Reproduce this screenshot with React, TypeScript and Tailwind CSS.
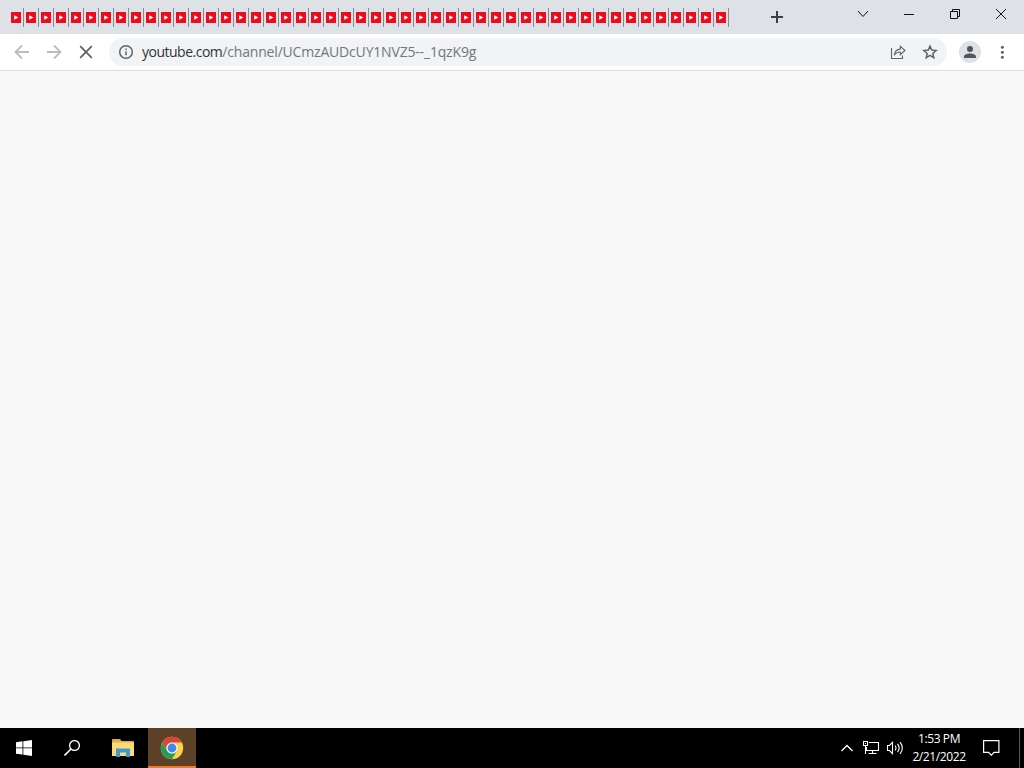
const TAB_COUNT = 48;

const YoutubeTab = () => (
  <div className="flex h-[19px] w-[15px] items-center justify-between pl-[2px]">
    <svg width="10" height="11" viewBox="0 0 10 11">
      <rect width="10" height="11" fill="#ee0b1c" />
      <path d="M3.2 3.2v4.6L7.4 5.5z" fill="#fff" />
    </svg>
    <div className="h-full w-px bg-[#858b91]" />
  </div>
);

const TabStrip = () => (
  <div className="flex h-[34px] bg-[#dee1e6]">
    <div className="flex pt-[8px] pl-[9px]">
      {Array.from({ length: TAB_COUNT }, (_, i) => (
        <YoutubeTab key={i} />
      ))}
    </div>

    <button className="ml-[34px] flex h-[33px] w-[28px] items-center justify-center">
      <svg width="12" height="12" viewBox="0 0 12 12" fill="#3c4043">
        <path d="M5 0h2v5h5v2H7v5H5V7H0V5h5z" />
      </svg>
    </button>

    <div className="ml-auto flex h-[28px] text-[#111]">
      <button className="flex w-[46px] items-center justify-center">
        <svg width="12" height="8" viewBox="0 0 12 8" fill="none" stroke="currentColor">
          <path d="M1 1l5 5.5L11 1" />
        </svg>
      </button>
      <button className="flex w-[46px] items-center justify-center">
        <svg width="10" height="2" viewBox="0 0 10 2">
          <path d="M0 1h10v1H0z" fill="currentColor" />
        </svg>
      </button>
      <button className="flex w-[46px] items-center justify-center">
        <svg width="10" height="10" viewBox="0 0 10 10" fill="none" stroke="currentColor">
          <path d="M.5 2.5h7v7h-7z" />
          <path d="M2.5 2.5v-2h7v7h-2" />
        </svg>
      </button>
      <button className="flex w-[46px] items-center justify-center">
        <svg width="10" height="10" viewBox="0 0 10 10" fill="none" stroke="currentColor">
          <path d="M0 0l10 10M10 0L0 10" />
        </svg>
      </button>
    </div>
  </div>
);

const Toolbar = () => (
  <div className="flex h-[37px] items-center border-b border-[#dadce0] bg-white pr-[14px] pl-[14px]">
    <div className="flex gap-[16px]">
      <svg width="16" height="16" viewBox="0 0 16 16" fill="none" stroke="#babcbe" strokeWidth="1.8">
        <path d="M15 8H2M8 1.5L1.5 8 8 14.5" />
      </svg>
      <svg width="16" height="16" viewBox="0 0 16 16" fill="none" stroke="#babcbe" strokeWidth="1.8">
        <path d="M1 8h13M8 1.5L14.5 8 8 14.5" />
      </svg>
      <svg width="16" height="16" viewBox="0 0 16 16" fill="none" stroke="#5f6368" strokeWidth="1.8">
        <path d="M2.2 2.2l11.6 11.6M13.8 2.2L2.2 13.8" />
      </svg>
    </div>

    <div className="ml-[15px] flex h-[28px] w-[838px] items-center rounded-full bg-[#f1f3f4] pr-[9px] pl-[9px]">
      <svg width="16" height="16" viewBox="0 0 16 16" fill="none" stroke="#5f6368" strokeWidth="1.5">
        <circle cx="8" cy="8" r="6.3" />
        <path d="M8 7.2v4M8 4.4v1.500" />
      </svg>
      <p className="ml-[8px] font-['Open_Sans','Noto_Sans',sans-serif] text-[14px] leading-[20px] tracking-[-0.18px] whitespace-nowrap text-[#73777b]">
        <span className="tracking-[-0.5px] text-[#303338]">youtube.com</span>/channel/UCmzAUDcUY1NVZ5--_1qzK9g
      </p>
      <div className="ml-auto flex gap-[16px]">
        <svg width="16" height="16" viewBox="0 0 16 16" fill="none" stroke="#5f6368" strokeWidth="1.1">
          <path d="M1.500 4v10.500h11v-3" />
          <path d="M4.200 11.300c.5-4 2.500-6 6.100-6.200V2.200l4.700 4.300-4.700 4.200V8c-2.800 0-4.600 1-6.100 3.300z" />
        </svg>
        <svg width="16" height="16" viewBox="0 0 16 16" fill="none" stroke="#5f6368" strokeWidth="1.5">
          <path d="M8 2.100l1.700 4 4.400.4-3.300 2.900 1 4.300L8 11.400l-3.800 2.300 1-4.300-3.300-2.900 4.400-.4z" />
        </svg>
      </div>
    </div>

    <div className="ml-[12px] flex h-[22px] w-[22px] items-center justify-center rounded-full bg-[#dee1e6]">
      <svg width="12" height="12" viewBox="0 0 12 12" fill="#4d5661">
        <circle cx="6" cy="3" r="3" />
        <path d="M0 12v-1.500C0 8.500 3.200 7.500 6 7.500s6 1 6 3V12z" />
      </svg>
    </div>
    <svg className="ml-auto" width="16" height="16" viewBox="0 0 16 16" fill="#5f6368">
      <circle cx="8.400" cy="3.300" r="1.500" />
      <circle cx="8.400" cy="8.300" r="1.500" />
      <circle cx="8.400" cy="13.300" r="1.500" />
    </svg>
  </div>
);

const ChromeLogo = () => (
  <svg width="24" height="24" viewBox="0 0 24 24">
    <circle cx="12" cy="12" r="11.2" fill="#fbd34c" />
    <path d="M2.300 6.400A11.200 11.200 0 0 1 21.700 6.400H12A5.600 5.600 0 0 0 7.150 14.800z" fill="#dc4437" />
    <path d="M2.300 6.400A11.200 11.200 0 0 0 12 23.200L16.850 14.800A5.600 5.600 0 0 1 7.150 14.800z" fill="#249b58" />
    <circle cx="12" cy="12" r="5.6" fill="#f3f5f4" />
    <circle cx="12" cy="12" r="4.4" fill="#4285ee" />
  </svg>
);

const Taskbar = () => (
  <div className="flex h-[40px] bg-black text-white">
    <button className="flex w-[48px] items-center justify-center">
      <svg width="16" height="16" viewBox="0 0 16 16" fill="currentColor">
        <path d="M0 2.2l6.500-.9v6.200H0zM7.300 1.200L16 0v7.500H7.300zM0 8.300h6.500v6.300L0 13.700zM7.300 8.300H16V16l-8.700-1.200z" />
      </svg>
    </button>
    <button className="flex w-[50px] items-center justify-center pr-[2px]">
      <svg width="16" height="16" viewBox="0 0 16 16" fill="none" stroke="currentColor" strokeWidth="1.3">
        <circle cx="10.500" cy="5.500" r="4.900" />
        <path d="M7 9L.5 15.500" strokeWidth="1.600" />
      </svg>
    </button>
    <button className="flex w-[50px] items-center justify-center">
      <svg width="22" height="18" viewBox="0 0 22 18">
        <path d="M0 1Q0 0 1 0h7l1.500 2H21q1 0 1 1v14H0z" fill="#dfaf45" />
        <path d="M0 3.500h22V17H0z" fill="#fbdb78" />
        <path d="M4 9.500h14V18h-4v-4.500H8V18H4z" fill="#4395d3" />
      </svg>
    </button>
    <button className="flex w-[48px] items-center justify-center border-b-2 border-[#f47a20] bg-[#5d4028] pt-[2px]">
      <ChromeLogo />
    </button>

    <div className="ml-auto flex items-center">
      <svg width="12" height="8" viewBox="0 0 12 8" fill="none" stroke="currentColor" strokeWidth="1.3">
        <path d="M.5 7L6 1.500 11.500 7" />
      </svg>
      <svg className="ml-[10px]" width="17" height="16" viewBox="0 0 17 16" fill="none" stroke="currentColor" strokeWidth="1.1">
        <path d="M6 2.500h9.500v8H3.500V7" />
        <path d="M.5 1.500h4v4h-4zM2.500 5.500V14M9.500 10.500v3M5.500 13.500h8" />
        <path d="M2 3.500h1" />
      </svg>
      <svg className="ml-[7px]" width="18" height="16" viewBox="0 0 18 16" fill="none" stroke="currentColor" strokeWidth="1.1">
        <path d="M.5 5.500H2.500l3-3.200v11.400l-3-3.200H.5z" />
        <path d="M8 5.500q2 2.500 0 5M10.500 3.800q3.300 4.200 0 8.400M13 2.200q4.700 5.800 0 11.600" />
      </svg>
      <div className="ml-[3px] w-[62px] text-center font-['Open_Sans','Noto_Sans',sans-serif] text-[12px] leading-[18px] tracking-[-0.4px]">
        <p>1:53 PM</p>
        <p>2/21/2022</p>
      </div>
      <svg className="ml-[13px]" width="17" height="16" viewBox="0 0 17 16" fill="none" stroke="currentColor" strokeWidth="1.2">
        <path d="M.6.6h15.300v11.800H11L8.300 15.200 5.600 12.400h-5z" />
      </svg>
      <div className="ml-[19px] h-full w-px bg-[#5a5a5a]" />
      <div className="w-[4px]" />
    </div>
  </div>
);

const App = () => {
  return (
    <div className="flex h-[768px] w-[1024px] flex-col overflow-hidden">
      <TabStrip />
      <Toolbar />
      <main className="flex-1 bg-[#f9f9f9]" />
      <Taskbar />
    </div>
  );
};

export default App;
